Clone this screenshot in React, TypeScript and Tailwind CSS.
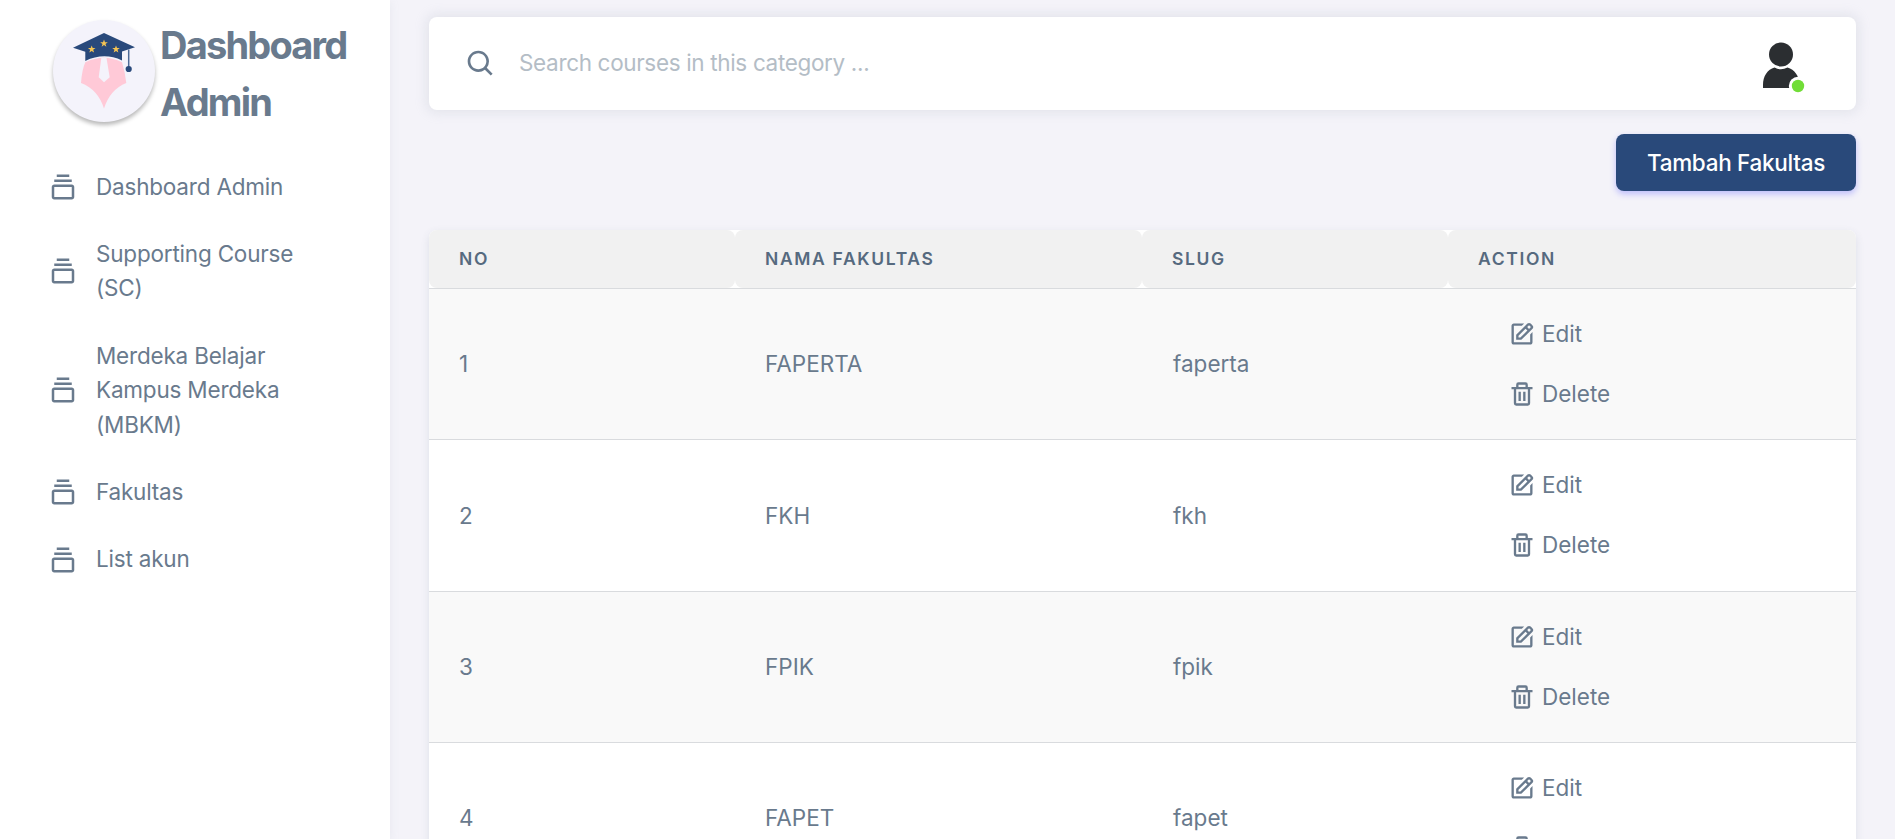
import type { ReactNode } from "react";
import { BiCollection, BiEdit, BiSearch, BiTrash } from "react-icons/bi";

const menu: string[][] = [
  ["Dashboard Admin"],
  ["Supporting Course", "(SC)"],
  ["Merdeka Belajar", "Kampus Merdeka", "(MBKM)"],
  ["Fakultas"],
  ["List akun"],
];

const rows = [
  { no: 1, name: "FAPERTA", slug: "faperta" },
  { no: 2, name: "FKH", slug: "fkh" },
  { no: 3, name: "FPIK", slug: "fpik" },
  { no: 4, name: "FAPET", slug: "fapet" },
];

const columns = "grid grid-cols-[306px_407px_306px_408px]";

function Star({ x, y }: { x: number; y: number }) {
  return (
    <path
      transform={`translate(${x} ${y})`}
      d="M0-3.9 1-1.2 3.8-1.2 1.5.5 2.4 3.3 0 1.6-2.4 3.3-1.5.5-3.8-1.2-1-1.2Z"
      fill="#f5c453"
    />
  );
}

function Logo() {
  return (
    <div className="ml-px h-[102px] w-[102px] shrink-0 rounded-full bg-[#f4f3fb] shadow-[0_3px_4px_rgba(0,0,0,0.28)]">
      <svg viewBox="1 0.5 102 102" className="h-full w-full">
        <path
          d="M33.300 42.800Q52 33.500 70 42.800Q73 52 74.300 63.500Q58 70 52 89Q46 70 29 63.500Q30 50 33.300 42.800Z"
          fill="#ffc9d7"
        />
        <path d="M49.300 38.500H54.500L57.700 57.800 52 62.800 46.700 57.800Z" fill="#f4f3fb" />
        <path d="M52 13.500 83 27.800 70 32V41Q52 32.500 33.300 41.500V32.300L21 28.200Z" fill="#29497b" />
        <path d="M76.700 30V48" stroke="#4d6a97" strokeWidth="1.500" />
        <circle cx="76.700" cy="49.500" r="3.100" fill="#29497b" />
        <Star x={39.7} y={29.8} />
        <Star x={52} y={24} />
        <Star x={64} y={29.8} />
      </svg>
    </div>
  );
}

function Avatar() {
  return (
    <svg viewBox="0 0 60 60" className="h-[60px] w-[60px]">
      <path d="M12 54V51C12 42 16.500 35.500 23.500 33.500Q30 37 36.500 33.500C43.500 35.500 48.500 42 48.500 51V54Z" fill="#2b2e31" />
      <circle cx="30" cy="20.500" r="12" fill="#2b2e31" />
      <circle cx="47" cy="52" r="9.200" fill="#ffffff" />
      <circle cx="47" cy="52" r="6.200" fill="#71dd37" />
    </svg>
  );
}

function HeadCell({ children }: { children: ReactNode }) {
  return (
    <div className="rounded-[8px] bg-[#f1f1f1] pl-[30px] text-[17.5px] leading-[58px] font-semibold tracking-[1.65px] text-[#566a7f]">
      {children}
    </div>
  );
}

export default function App() {
  return (
    <div className="flex h-[839px] w-[1895px] overflow-hidden bg-[#f4f3f9] font-['Inter','Liberation_Sans',sans-serif] text-[22.500px] text-[#697a8d]">
      <aside className="w-[390px] shrink-0 bg-white shadow-[0_2px_9px_rgba(161,172,184,0.15)]">
        <div className="flex h-[114px] items-center mt-[14px] pl-[52px]">
          <Logo />
          <h1 className="mt-[6px] ml-[5px] text-[38px] leading-[57px] font-bold tracking-[-1.800px]">
            Dashboard
            <br />
            Admin
          </h1>
        </div>
        <nav className="mt-[25px] pl-[48px]">
          {menu.map((lines) => (
            <a key={lines[0]} className="flex items-center py-[16.500px]">
              <BiCollection className="mr-[18px] h-[30px] w-[30px] shrink-0" />
              <span className="leading-[34.400px] tracking-[-0.200px]">
                {lines.map((line) => (
                  <span key={line} className="block whitespace-nowrap">
                    {line}
                  </span>
                ))}
              </span>
            </a>
          ))}
        </nav>
      </aside>

      <main className="flex flex-col pt-[17px] pl-[39px]">
        <header className="flex h-[93px] w-[1427px] shrink-0 items-center rounded-[8px] bg-white pr-[45px] pl-[36px] shadow-[0_0_12px_3px_rgba(161,172,184,0.2)]">
          <BiSearch className="h-[32px] w-[32px]" />
          <span className="-mt-[2px] ml-[22px] tracking-[-0.340px] text-[#b4bdc6]">
            Search courses in this category ...
          </span>
          <div className="ml-auto">
            <Avatar />
          </div>
        </header>

        <div className="mt-[24px] flex w-[1427px] justify-end">
          <button className="h-[57px] w-[240px] rounded-[8px] bg-[#29497a] font-medium tracking-[-0.300px] whitespace-nowrap text-white shadow-[0_3px_6px_rgba(105,108,255,0.4)]">
            Tambah Fakultas
          </button>
        </div>

        <section className="mt-[39px] w-[1427px] shrink-0 rounded-t-[8px] bg-white shadow-[0_3px_9px_rgba(67,89,113,0.12)]">
          <div className={`${columns} border-b border-[#d9dbde]`}>
            <HeadCell>NO</HeadCell>
            <HeadCell>NAMA FAKULTAS</HeadCell>
            <HeadCell>SLUG</HeadCell>
            <HeadCell>ACTION</HeadCell>
          </div>
          {rows.map((row) => (
            <div
              key={row.no}
              className={`${columns} h-[151.300px] items-center border-b border-[#d9dbde] odd:bg-white even:bg-[#f9f9f9]`}
            >
              <div className="pl-[30px]">{row.no}</div>
              <div className="pl-[30px]">{row.name}</div>
              <div className="pl-[31px]">{row.slug}</div>
              <div className="pl-[60px] leading-[60px]">
                <a className="flex items-center">
                  <BiEdit className="mr-[6px] h-[28px] w-[28px]" />
                  Edit
                </a>
                <a className="flex items-center">
                  <BiTrash className="mr-[6px] h-[28px] w-[28px]" />
                  Delete
                </a>
              </div>
            </div>
          ))}
        </section>
      </main>
    </div>
  );
}
